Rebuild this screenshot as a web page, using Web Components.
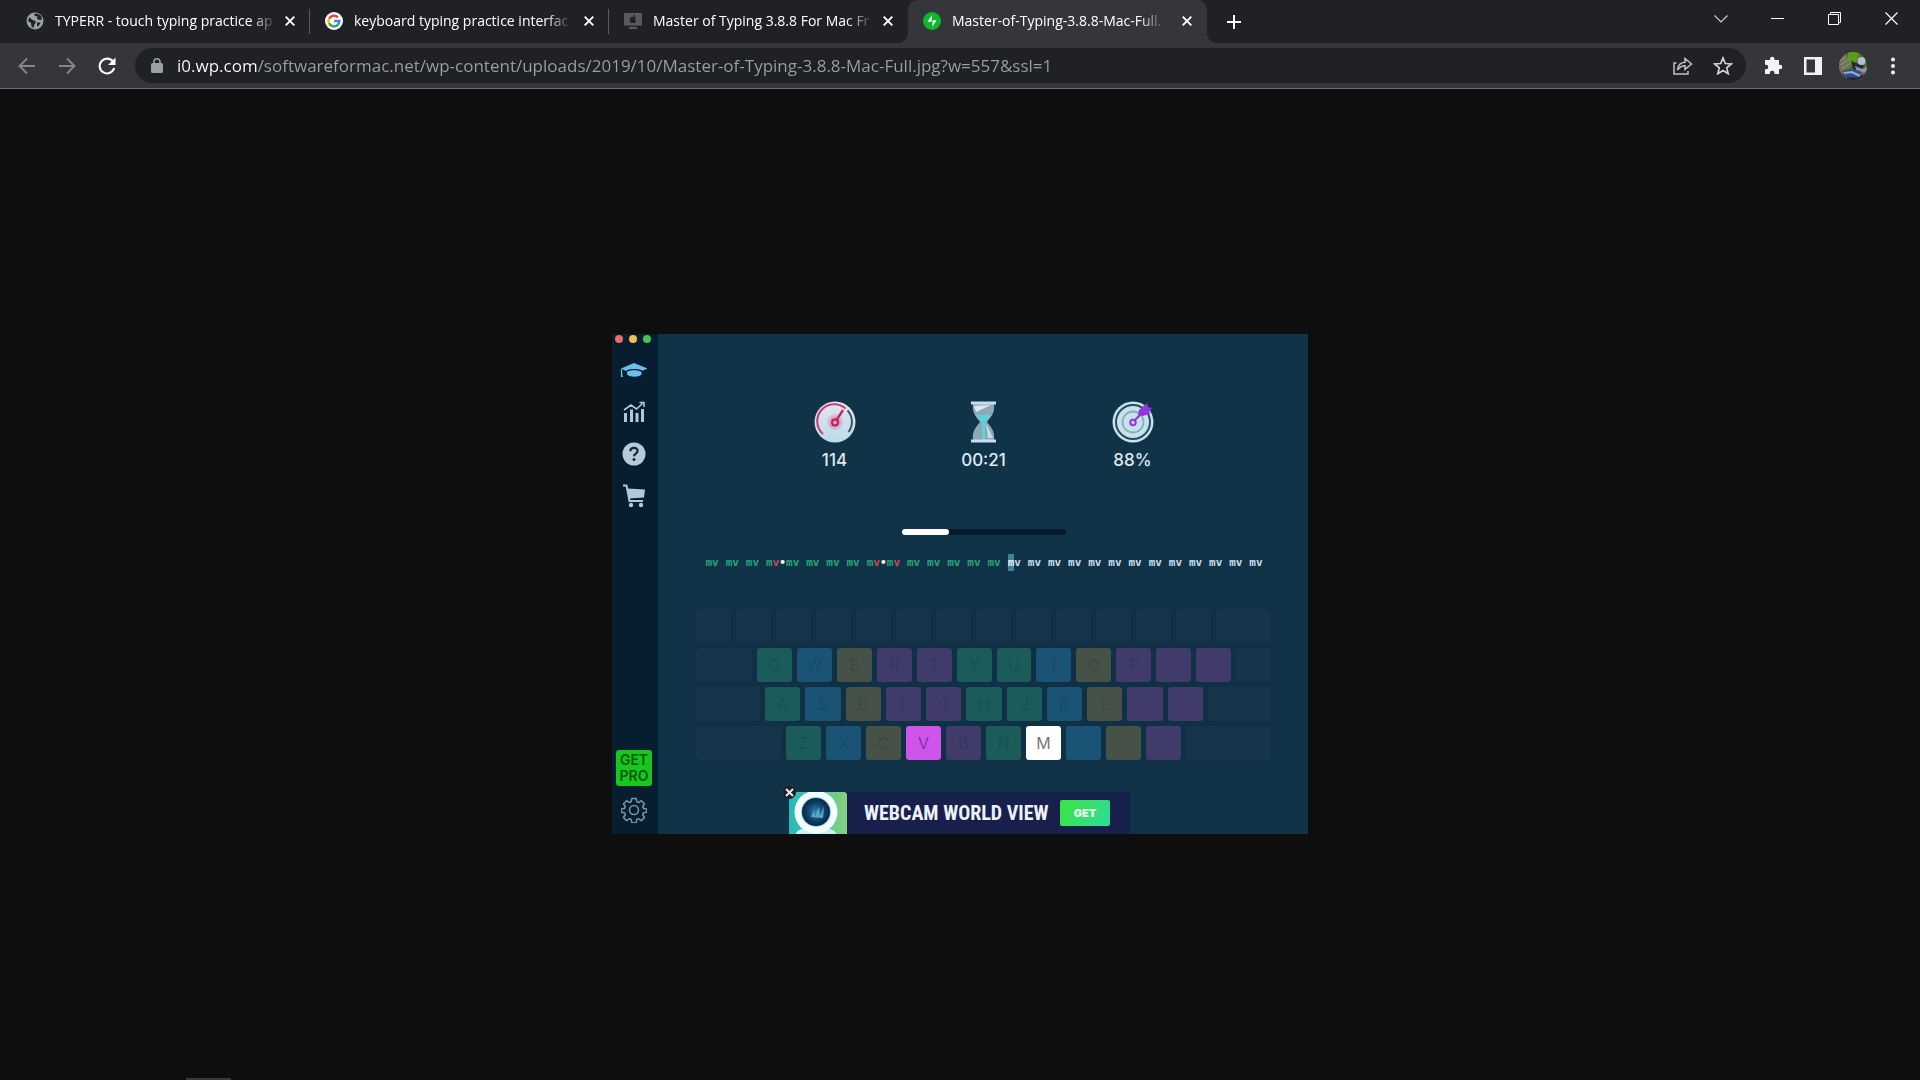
<!DOCTYPE html>
<html lang="en">
<head>
<meta charset="utf-8">
<title>Master-of-Typing-3.8.8-Mac-Full.jpg</title>
<style>
html, body { margin: 0; height: 100%; background: #0e0e0e; overflow: hidden; }
body { font-family: "Open Sans", "Noto Sans", sans-serif; color: #fff; }
</style>
</head>
<body>
<browser-window>
  <tab-strip slot="tabs">
    <browser-tab label="TYPERR - touch typing practice ap">
      <svg slot="icon" width="18" height="18" viewBox="0 0 18 18"><circle cx="9" cy="9" r="8.5" fill="#9aa0a6"/><path d="M3 5.500C5 6 5.500 8 8 8.500c2.500.5 2 2.500.5 3.500l-1 4-2-1.500-.5-3.500L2 9zM8 1.800l1 2.200 2.500.5L11 7l2.500 1 2.500-.5-1-3.500-3-2.200z" fill="#202124"/><path d="M11 10.500h3.500l-1.500 3-2 1z" fill="#202124"/></svg>
    </browser-tab>
    <browser-tab label="keyboard typing practice interfac">
      <svg slot="icon" width="20" height="20" viewBox="0 0 20 20"><circle cx="10" cy="10" r="10" fill="#fff"/><g fill="none" stroke-width="2.800"><path d="M14.300 6A6 6 0 0 0 4.600 7.500" stroke="#ea4335"/><path d="M4.600 7.400a6 6 0 0 0 0 5.200" stroke="#fbbc05"/><path d="M4.600 12.500A6 6 0 0 0 14 14.500" stroke="#34a853"/><path d="M14 14.500A6 6 0 0 0 16 10h-6" stroke="#4285f4"/></g></svg>
    </browser-tab>
    <browser-tab label="Master of Typing 3.8.8 For Mac Fr">
      <svg slot="icon" width="20" height="18" viewBox="0 0 20 18"><path d="M0 0h20v14H0zM7 15.500h6l2 1.500v1H5v-1z" fill="#5a5a5c"/><path d="M10 4.500c1-.8 2.500-.6 3.200.4-1.500 1-1.200 3 .3 3.700-.6 1.700-1.600 3-2.700 2.500-.6-.3-1-.3-1.600 0C7.900 11.600 6.500 9.500 6.500 7.500c0-2.600 2-3.500 3.500-3zM10 4c0-1.300.8-2.300 2-2.500C12 2.800 11.200 3.900 10 4z" fill="#202124"/></svg>
    </browser-tab>
    <browser-tab label="Master-of-Typing-3.8.8-Mac-Full." active>
      <svg slot="icon" width="18" height="18" viewBox="0 0 18 18"><circle cx="9" cy="9" r="9" fill="#0cb82b"/><path d="M9 3L4.500 9.800h3.700zM9.300 15l4.300-6.800H9.800zM8 8l1-5v6zM10 10l-.700 5V9z" fill="#fff"/></svg>
    </browser-tab>
  </tab-strip>
  <tool-bar slot="toolbar"></tool-bar>
  <typing-app></typing-app>
</browser-window>

<script>
function define(name, css, html, setup) {
  const template = document.createElement('template');
  const base = ':host,*{box-sizing:border-box}button{all:unset;box-sizing:border-box;display:flex;align-items:center;justify-content:center}svg{display:block}';
  template.innerHTML = '<style>' + base + css + '</style>' + html;
  customElements.define(name, class extends HTMLElement {
    constructor() {
      super();
      this.attachShadow({ mode: 'open' }).appendChild(template.content.cloneNode(true));
    }
    connectedCallback() { if (setup) setup(this, this.shadowRoot); }
  });
}

define('browser-window', `
  :host{display:flex;flex-direction:column;height:100vh;position:relative}
  main{flex:1;display:flex;align-items:center;justify-content:center;min-height:0;padding-bottom:1px}
  .stub{position:absolute;left:186px;bottom:0;width:45px;height:2px;background:#3a3839}`,
  `<slot name="tabs"></slot><slot name="toolbar"></slot><main><slot></slot></main><div class="stub"></div>`);

define('tab-strip', `
  :host{display:flex;height:43px;background:#202124;padding-left:11px;flex:none}
  .tabs{display:flex}
  .new{width:54px;height:43px}
  .win{margin-left:auto;display:flex;height:37px}
  .win button{width:57px}`,
  `<div class="tabs"><slot></slot></div>
  <button class="new" aria-label="New tab"><svg width="16" height="16" viewBox="0 0 16 16"><path d="M8 1v14M1 8h14" stroke="#fff" stroke-width="2"/></svg></button>
  <div class="win">
    <button aria-label="Search tabs"><svg width="14" height="8" viewBox="0 0 14 8"><path d="M.500.500L7 7 13.500.500" fill="none" stroke="#ccc" stroke-width="1.200"/></svg></button>
    <button aria-label="Minimize"><svg width="13" height="1" viewBox="0 0 13 1"><path d="M0 0h13v1H0z" fill="#fff"/></svg></button>
    <button aria-label="Restore"><svg width="13" height="13" viewBox="0 0 13 13"><path d="M.500 2.500h10v10H.500zM2.500 2.500v-2h10v10h-2" fill="none" stroke="#fff"/></svg></button>
    <button aria-label="Close"><svg width="13" height="13" viewBox="0 0 13 13"><path d="M.500.500l12 12M12.500.500l-12 12" stroke="#fff" stroke-width="1.200"/></svg></button>
  </div>`);

define('browser-tab', `
  :host{display:flex;align-items:center;width:299px;height:43px;padding:0 10px 1px 15px;position:relative;font-size:14px;line-height:20px}
  :host::after{content:"";position:absolute;right:0;top:9px;height:25px;width:1px;background:#5a5b5e}
  :host([active]){background:#35363a;border-radius:10px 10px 0 0}
  :host([active])::after,:host([active])::before{content:"";position:absolute;top:auto;bottom:0;width:10px;height:10px;background:radial-gradient(circle at 0 0,#202124 10px,#35363a 10px)}
  :host([active])::before{left:-10px}
  :host([active])::after{right:-10px;background:radial-gradient(circle at 100% 0,#202124 10px,#35363a 10px)}
  :host(:nth-child(3))::after{display:none}
  .icon{width:18px;display:flex;justify-content:center}
  .label{white-space:nowrap;margin:0 auto 0 11px;-webkit-mask-image:linear-gradient(90deg,#000 calc(100% - 22px),rgba(0,0,0,.15))}
  button{width:20px;height:20px}`,
  `<span class="icon"><slot name="icon"></slot></span><span class="label"></span><button aria-label="Close tab"><svg width="10" height="10" viewBox="0 0 10 10"><path d="M.700.700l8.600 8.600M9.300.700L.700 9.300" stroke="#fff" stroke-width="1.900"/></svg></button>`,
  (host, root) => { root.querySelector('.label').textContent = host.getAttribute('label'); });

define('tool-bar', `
  :host{display:flex;align-items:center;height:46px;background:#35363a;border-bottom:1px solid #6b6c6f;padding:0 7px;flex:none}
  button{width:40px;height:35px;flex:none}
  .box{flex:1;display:flex;align-items:center;height:35px;border-radius:18px;background:#202124;margin:0 7px 0 8px;padding:0 3px 0 16px}
  .nav{display:flex}
  input{flex:1;min-width:0;border:0;outline:0;padding:0;margin-left:14px;height:30px;font:17px/24px "Open Sans","Noto Sans",sans-serif;color:transparent;background:linear-gradient(90deg,#fff 80px,#9aa0a6 80px);-webkit-background-clip:text;background-clip:text}
  .avatar{width:28px;height:28px;border-radius:50%;overflow:hidden}`,
  `<div class="nav">
    <button aria-label="Back"><svg width="18" height="18" viewBox="0 0 18 18"><path d="M17 9H2M9 1.500L1.500 9 9 16.500" fill="none" stroke="#85868a" stroke-width="1.900"/></svg></button>
    <button aria-label="Forward"><svg width="18" height="18" viewBox="0 0 18 18"><path d="M1 9h15M9 1.500L16.500 9 9 16.500" fill="none" stroke="#85868a" stroke-width="1.900"/></svg></button>
    <button aria-label="Reload"><svg width="18" height="18" viewBox="0 0 18 18"><path d="M15.300 5A7.400 7.400 0 1 0 16.200 11" fill="none" stroke="#fff" stroke-width="2.100"/><path d="M17.500.500V8H10z" fill="#fff"/></svg></button>
  </div>
  <div class="box">
    <svg width="12" height="15" viewBox="0 0 12 15"><rect x="0" y="5" width="12" height="10" rx="1.500" fill="#9aa0a6"/><path d="M3 6V3.800a3 3 0 0 1 6 0V6" fill="none" stroke="#9aa0a6" stroke-width="1.600"/></svg>
    <input aria-label="Address" value="i0.wp.com/softwareformac.net/wp-content/uploads/2019/10/Master-of-Typing-3.8.8-Mac-Full.jpg?w=557&amp;ssl=1">
    <button aria-label="Share"><svg width="20" height="18" viewBox="0 0 20 18"><g fill="none" stroke="#bdc1c6" stroke-width="1.500"><path d="M3.500 6H1v11h14v-3"/><path d="M4.500 13C5 8 8 5.500 12 5.300V1.500L18.500 7 12 12.300V8.700C8.500 8.700 6.500 10 4.500 13z"/></g></svg></button>
    <button aria-label="Bookmark"><svg width="20" height="19" viewBox="0 0 20 19"><path d="M10 2l2.300 5.500 6 .5-4.600 3.900 1.500 5.800L10 14.500l-5.200 3.200 1.500-5.800L1.700 8l6-.5z" fill="none" stroke="#d0d2d6" stroke-width="1.700"/></svg></button>
  </div>
  <button aria-label="Extensions"><svg width="19" height="19" viewBox="0 0 19 19"><path d="M1 4h5V3a2.200 2.200 0 0 1 4.500 0v1H15v4.700h1a2.300 2.300 0 0 1 0 4.600h-1V18h-4.500v-1a2.300 2.300 0 0 0-4.600 0v1H1v-4.700h1a2.200 2.200 0 0 0 0-4.500H1z" fill="#f1f3f4"/></svg></button>
  <button aria-label="Side panel"><svg width="18" height="18" viewBox="0 0 18 18"><path fill-rule="evenodd" d="M0 0h18v18H0zM2.500 2.500v13h8.500v-13z" fill="#f1f3f4"/></svg></button>
  <button aria-label="Profile"><svg class="avatar" viewBox="0 0 28 28"><rect width="28" height="28" fill="#4f6a35"/><path d="M9 0h12l-4 10-8 5z" fill="#5c9a1c"/><path d="M0 5l8-3 3 14-11 4z" fill="#746f5b"/><path d="M1 9l6-4M2 13l8-6M3 17l7-5" stroke="#8a8d75" stroke-width="1.500"/><path d="M12 9l8 3 2-2 3 5-7 5-4-3z" fill="#252b3f"/><circle cx="22.500" cy="9" r="4" fill="#b9bdcb"/><path d="M16 14l7 3 5-2v7l-10-2z" fill="#8f93ab"/><path d="M3 20c6-4 11-3 18-1l7 4v5H4z" fill="#364e7b"/><path d="M5 21l8-1 8 4" stroke="#8fb0d8" stroke-width="2" fill="none"/><path d="M0 22l5-2M21 22l5-1" stroke="#b4583e" stroke-width="1.500"/><path d="M8 27h12l4-3" stroke="#1c2333" stroke-width="3" fill="none"/></svg></button>
  <button aria-label="Menu"><svg width="4" height="18" viewBox="0 0 4 18"><g fill="#f1f3f4"><circle cx="2" cy="2.500" r="2"/><circle cx="2" cy="9" r="2"/><circle cx="2" cy="15.500" r="2"/></g></svg></button>`);

define('typing-app', `
  :host{display:flex;width:696px;min-height:500px;background:#113347;font-family:Inter,"Liberation Sans",sans-serif}
  section{flex:1;display:flex;flex-direction:column;align-items:center;padding:67px 0 0 1px}
  .stats{display:grid;grid-template-columns:repeat(3,149px)}
  .bar{width:164px;height:6px;margin-top:59px;border-radius:3px;background:#061a2c}
  .bar i{display:block;width:47px;height:6px;border-radius:3px;background:#fff}
  typing-line{margin-top:19px}
  .kb{display:flex;flex-direction:column;gap:5px;width:575px;margin-top:38px;background:#103145;box-shadow:0 0 6px 2px #103145}
  ad-banner{align-self:flex-start;margin:auto 0 0 130px}`,
  `<side-bar></side-bar>
  <section>
    <div class="stats">
      <stat-item value="114"><svg width="42" height="42" viewBox="0 0 42 42"><defs><linearGradient id="a" x2="0" y2="1"><stop stop-color="#e6e3f2"/><stop offset="1" stop-color="#b8dde8"/></linearGradient><radialGradient id="b"><stop stop-color="#e0638f"/><stop offset="1" stop-color="#e0638f" stop-opacity="0"/></radialGradient></defs><circle cx="21" cy="21" r="20.500" fill="url(#a)"/><g fill="none" stroke-width="2"><path d="M9 33A17 17 0 0 1 31.500 7.500" stroke="#cf3d70"/><path d="M33.500 9.300A17 17 0 0 1 34.500 31" stroke="#3b5766"/></g><circle cx="21" cy="21" r="9" fill="url(#b)"/><path d="M22 20l7-11" stroke="#c42a61" stroke-width="2.400"/><circle cx="21" cy="21.500" r="3" fill="#e7a3bd" stroke="#b9215b" stroke-width="2"/></svg></stat-item>
      <stat-item value="00:21"><svg width="25" height="42" viewBox="0 0 25 42"><path d="M2 3h21c1 8-2 12-7 18 5 6 8 10 7 18H2c-1-8 2-12 7-18C4 15 1 11 2 3z" fill="#8ea8b7"/><path d="M3 5l17-1-15 7z" fill="#dce8f3"/><path d="M15 22l7 15h-5z" fill="#c9d8e3"/><path d="M5 14h15l-6 7v17h-3V21z" fill="#58d7da"/><path d="M0 .500h25v3H0zM0 38.500h25v3H0z" fill="#c7def2"/></svg></stat-item>
      <stat-item value="88%"><svg width="42" height="42" viewBox="0 0 42 42"><circle cx="21" cy="21" r="20.500" fill="#c7e2ef"/><g fill="none"><circle cx="21" cy="21" r="17" stroke="#294c60" stroke-width="2"/><circle cx="21" cy="21" r="10.500" stroke="#91acb9" stroke-width="1.800"/></g><circle cx="21" cy="21.500" r="2.800" fill="#d9b4ef" stroke="#8b37cd" stroke-width="1.800"/><path d="M23 19l7-7" stroke="#8b37cd" stroke-width="2.200"/><path d="M27 9l8-7 1 4 4 1-3 4 2 1-8 3-5-1z" fill="#9036dc"/></svg></stat-item>
    </div>
    <div class="bar" role="progressbar" aria-valuenow="29"><i></i></div>
    <typing-line></typing-line>
    <div class="kb">
      <key-row keys="- - - - - - - - - - - - -" left="0" right="55"></key-row>
      <key-row keys="Q W E R T Y U I O P [ ]" colors="gbopsggbopps" left="56" right="35"></key-row>
      <key-row keys="A S D F G H J K L ; '" colors="gbopsggbopp" left="64" right="63"></key-row>
      <key-row keys="Z X C V B N M , . /" colors="gboVpgMbop" left="85" right="85"></key-row>
    </div>
    <ad-banner></ad-banner>
  </section>`);

define('side-bar', `
  :host{display:flex;flex-direction:column;align-items:center;width:46px;background:#071d30;padding:1px 2px 0 0}
  .dots{display:flex;gap:6px;align-self:flex-start;margin:0 0 6px 3px}
  .dots i{width:8px;height:8px;border-radius:50%}
  nav button{width:44px;height:42px}
  .pro{margin-top:auto;width:36px;height:36px;border-radius:3px;background:#18c71d;color:#075a0e;font-size:14px;line-height:16px;font-weight:600;text-align:center}
  .gear{width:44px;height:48px}`,
  `<div class="dots"><i style="background:#ec6b66"></i><i style="background:#f3be55"></i><i style="background:#45c350"></i></div>
  <nav>
    <button aria-label="Lessons"><svg width="28" height="16" viewBox="0 0 28 16"><path d="M14 1l13.500 5.500-5 2.200C20 6.500 8 6.500 6 9L1 6.500z" fill="#6cc0ee"/><path d="M7 10c2-2.500 12-2.500 14.500 0v2.500c-3 3-11 3-14.500 0zM1 7h1.200v5l.8 3H.800z" fill="#6cc0ee"/></svg></button>
    <button aria-label="Statistics"><svg width="22" height="22" viewBox="0 0 22 22"><path d="M1 12h3v9H1zM7 8.500h3V21H7zM12.500 12h3v9h-3zM18 8h3v13h-3z" fill="#b3c7d6"/><path d="M1 9l7-5 5.500 4 6-5.500M16.500 1.500H21V6" fill="none" stroke="#b3c7d6" stroke-width="1.600"/></svg></button>
    <button aria-label="Help"><svg width="24" height="24" viewBox="0 0 24 24"><circle cx="12" cy="12" r="11.500" fill="#b7cad8"/><path d="M8.300 9.300c0-4.500 7.500-4.300 7.300-.3-.1 2.600-3.600 2.700-3.600 5.300" fill="none" stroke="#0e2638" stroke-width="2.200"/><circle cx="12" cy="17.500" r="1.500" fill="#0e2638"/></svg></button>
    <button aria-label="Shop"><svg width="24" height="24" viewBox="0 0 24 24"><path d="M1 1.500h3.500L7.500 17H21" fill="none" stroke="#b3c7d6" stroke-width="2"/><path d="M5.500 4.500l17.500 1-1 8-15 1z" fill="#b3c7d6"/><circle cx="9" cy="21" r="2.200" fill="#b3c7d6"/><circle cx="19" cy="21" r="2.200" fill="#b3c7d6"/></svg></button>
  </nav>
  <button class="pro">GET<br>PRO</button>
  <button class="gear" aria-label="Settings"><svg width="26" height="26" viewBox="0 0 26 26"><g fill="none" stroke="#7c909e" stroke-width="1.600" stroke-linejoin="round"><path d="M10.800 1.500h4.400l.6 3.200 1.900.8 2.700-1.800 3.100 3.100-1.800 2.700.8 1.900 3.200.6v3.200l-3.200.6-.8 2 1.800 2.700-3.100 3.100-2.700-1.800-1.900.8-.6 3.100h-4.400l-.6-3.100-1.900-.8-2.700 1.800-3.100-3.100 1.800-2.700-.8-2-3.200-.6v-3.200l3.200-.6.8-1.900-1.800-2.700 3.100-3.100 2.700 1.800 1.900-.8z"/><circle cx="13" cy="13" r="4.500"/></g></svg></button>`);

define('stat-item', `
  :host{display:flex;flex-direction:column;align-items:center;gap:7px;font-size:17px;line-height:20px;font-weight:500;color:#dfeaf2}`,
  `<slot></slot><span></span>`,
  (host, root) => { root.querySelector('span').textContent = host.getAttribute('value'); });

define('typing-line', `
  :host{display:grid;grid-template-columns:repeat(28,1fr);width:572px;padding-left:8px;font:bold 11px/17px "DejaVu Sans Mono","Liberation Mono",monospace;color:#c9dfeb}
  span{white-space:nowrap;height:17px}
  .done{color:#22a678}
  b{color:#d1494f}
  em{color:#fff;font-style:normal}
  mark{display:inline-block;background:#3e8397;color:#dff4fa}`, ``,
  (host, root) => {
    for (let i = 0; i < 28; i++) {
      const word = document.createElement('span');
      if (i < 15) word.className = 'done';
      word.innerHTML = i === 3 || i === 8 ? 'm<b>v</b><em>•</em>' : i === 9 ? 'm<b>v</b>' : i === 15 ? '<mark>m</mark>v' : 'mv';
      root.appendChild(word);
    }
  });

define('key-row', `
  :host{display:flex;gap:5px;height:34px}
  div,button{border-radius:3px;background:#16354a}
  div{flex:none}
  button{flex:1;min-width:0;font-size:16px;line-height:20px;color:rgba(8,40,62,.22)}
  .g{background:#1b5b5a}.b{background:#1b5374}.o{background:#465147}.p,.s{background:#403b6b}
  .V{background:#cf55ea;color:#8a2ca3}.M{background:#fff;color:#777}`, ``,
  (host, root) => {
    const side = name => {
      const width = +host.getAttribute(name);
      if (!width) return;
      const pad = document.createElement('div');
      pad.style.width = width + 'px';
      root.appendChild(pad);
    };
    side('left');
    const colors = host.getAttribute('colors') || '';
    host.getAttribute('keys').split(' ').forEach((key, i) => {
      const cap = document.createElement('button');
      cap.className = colors[i] || '';
      if (/[A-Z]/.test(key)) cap.textContent = key;
      else cap.setAttribute('aria-label', key);
      root.appendChild(cap);
    });
    side('right');
  });

define('ad-banner', `
  :host{display:flex;align-items:center;width:341px;height:42px;background:#17204a;position:relative;padding-right:20px}
  .x{position:absolute;left:-6px;top:-6px;width:13px;height:13px;border-radius:50%;background:#1b2022}
  strong{flex:1;margin-left:17px;font:bold 20px/24px "Liberation Sans Narrow","Roboto Condensed","Liberation Sans",sans-serif;white-space:nowrap;color:#eef0fb}
  .get{width:50px;height:26px;border-radius:2px;background:linear-gradient(120deg,#3be43f,#2edc9b);font-size:11px;line-height:16px;font-weight:900;color:#e9fff0}`,
  `<svg width="58" height="42" viewBox="0 0 58 42"><defs><linearGradient id="g" x2="1" y2="0"><stop stop-color="#25b9c0"/><stop offset="1" stop-color="#85d27c"/></linearGradient><radialGradient id="l"><stop stop-color="#2d88b8"/><stop offset=".6" stop-color="#12426e"/><stop offset="1" stop-color="#0c2544"/></radialGradient></defs><path d="M0 0h56l2 2v40H0z" fill="url(#g)"/><ellipse cx="27" cy="42" rx="20" ry="7" fill="#c9f4f5"/><circle cx="27" cy="20" r="21.500" fill="#f4fdff"/><circle cx="27" cy="20" r="15" fill="#8fd4e4"/><circle cx="27" cy="20" r="14" fill="url(#l)"/><path d="M22 25l3-7 1 6 4-9 1 9 4-10-1 12z" fill="#5ba6c0"/></svg>
  <button class="x" aria-label="Close ad"><svg width="9" height="9" viewBox="0 0 9 9"><path d="M1 1l7 7M8 1L1 8" stroke="#e8e8e8" stroke-width="2"/></svg></button>
  <strong>WEBCAM WORLD VIEW</strong><button class="get">GET</button>`);
</script>
</body>
</html>
